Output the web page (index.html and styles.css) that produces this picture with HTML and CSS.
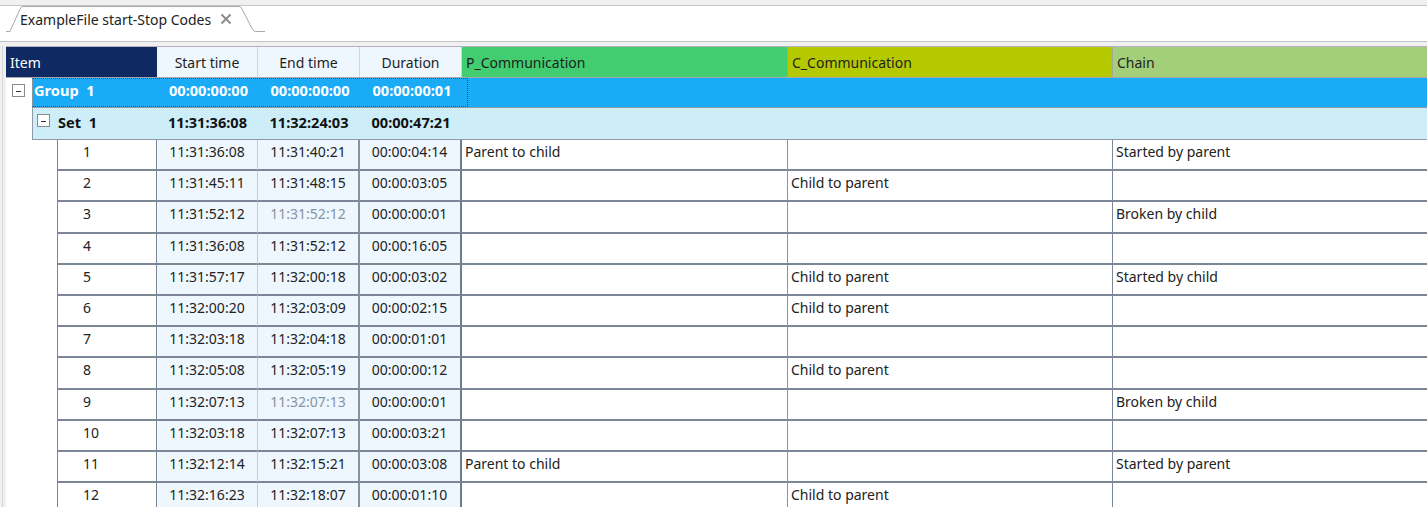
FILE: index.html
```html
<!DOCTYPE html>
<html>
<head>
<meta charset="utf-8">
<link rel="stylesheet" href="styles.css">
</head>
<body>
<div class="topbar"></div>
<div class="tabstrip">
  <div class="tab">
    <svg class="tab-outline" width="262" height="27" viewBox="0 0 262 27">
      <path d="M3 25.5 H7 L17.5 2 Q18.3 0.5 20 0.5 H236 Q237.7 0.5 238.5 2 L249.5 23.5 Q250.7 25.5 253 25.5 H262" fill="#fff" stroke="#a9a9a9" stroke-width="1"/>
    </svg>
    <span class="tab-title">ExampleFile start-Stop Codes</span>
    <svg class="tab-close" width="12" height="12" viewBox="0 0 12 12">
      <path d="M1.5 1.5 L10.5 10.5 M10.5 1.5 L1.5 10.5" stroke="#8d8d8d" stroke-width="2" fill="none"/>
    </svg>
  </div>
</div>
<div class="workspace">
  <div class="grid">
    <div class="hdr">
      <div class="hc hc-item">Item</div>
      <div class="hc hc-time">Start time</div>
      <div class="hc hc-time">End time</div>
      <div class="hc hc-time">Duration</div>
      <div class="hc hc-p">P_Communication</div>
      <div class="hc hc-c">C_Communication</div>
      <div class="hc hc-chain">Chain</div>
    </div>

    <div class="group">
      <div class="indent"><span class="exp"></span></div>
      <div class="group-focus">
        <div class="g-label">Group&nbsp; 1</div>
        <div class="g-time">00:00:00:00</div>
        <div class="g-time">00:00:00:00</div>
        <div class="g-time">00:00:00:01</div>
      </div>
      <div class="g-fill"></div>
    </div>

    <div class="set">
      <div class="indent"></div>
      <div class="s-label"><span class="exp"></span><span class="s-name">Set&nbsp; 1</span></div>
      <div class="s-time">11:31:36:08</div>
      <div class="s-time">11:32:24:03</div>
      <div class="s-time">00:00:47:21</div>
      <div class="s-fill"></div>
    </div>

    <div class="row">
      <div class="indent"></div><div class="c c-item">1</div>
      <div class="c c-st">11:31:36:08</div><div class="c c-en">11:31:40:21</div><div class="c c-du">00:00:04:14</div>
      <div class="c c-p">Parent to child</div><div class="c c-c"></div><div class="c c-ch">Started by parent</div>
    </div>
    <div class="row">
      <div class="indent"></div><div class="c c-item">2</div>
      <div class="c c-st">11:31:45:11</div><div class="c c-en">11:31:48:15</div><div class="c c-du">00:00:03:05</div>
      <div class="c c-p"></div><div class="c c-c">Child to parent</div><div class="c c-ch"></div>
    </div>
    <div class="row">
      <div class="indent"></div><div class="c c-item">3</div>
      <div class="c c-st">11:31:52:12</div><div class="c c-en dim">11:31:52:12</div><div class="c c-du">00:00:00:01</div>
      <div class="c c-p"></div><div class="c c-c"></div><div class="c c-ch">Broken by child</div>
    </div>
    <div class="row">
      <div class="indent"></div><div class="c c-item">4</div>
      <div class="c c-st">11:31:36:08</div><div class="c c-en">11:31:52:12</div><div class="c c-du">00:00:16:05</div>
      <div class="c c-p"></div><div class="c c-c"></div><div class="c c-ch"></div>
    </div>
    <div class="row">
      <div class="indent"></div><div class="c c-item">5</div>
      <div class="c c-st">11:31:57:17</div><div class="c c-en">11:32:00:18</div><div class="c c-du">00:00:03:02</div>
      <div class="c c-p"></div><div class="c c-c">Child to parent</div><div class="c c-ch">Started by child</div>
    </div>
    <div class="row">
      <div class="indent"></div><div class="c c-item">6</div>
      <div class="c c-st">11:32:00:20</div><div class="c c-en">11:32:03:09</div><div class="c c-du">00:00:02:15</div>
      <div class="c c-p"></div><div class="c c-c">Child to parent</div><div class="c c-ch"></div>
    </div>
    <div class="row">
      <div class="indent"></div><div class="c c-item">7</div>
      <div class="c c-st">11:32:03:18</div><div class="c c-en">11:32:04:18</div><div class="c c-du">00:00:01:01</div>
      <div class="c c-p"></div><div class="c c-c"></div><div class="c c-ch"></div>
    </div>
    <div class="row">
      <div class="indent"></div><div class="c c-item">8</div>
      <div class="c c-st">11:32:05:08</div><div class="c c-en">11:32:05:19</div><div class="c c-du">00:00:00:12</div>
      <div class="c c-p"></div><div class="c c-c">Child to parent</div><div class="c c-ch"></div>
    </div>
    <div class="row">
      <div class="indent"></div><div class="c c-item">9</div>
      <div class="c c-st">11:32:07:13</div><div class="c c-en dim">11:32:07:13</div><div class="c c-du">00:00:00:01</div>
      <div class="c c-p"></div><div class="c c-c"></div><div class="c c-ch">Broken by child</div>
    </div>
    <div class="row">
      <div class="indent"></div><div class="c c-item">10</div>
      <div class="c c-st">11:32:03:18</div><div class="c c-en">11:32:07:13</div><div class="c c-du">00:00:03:21</div>
      <div class="c c-p"></div><div class="c c-c"></div><div class="c c-ch"></div>
    </div>
    <div class="row">
      <div class="indent"></div><div class="c c-item">11</div>
      <div class="c c-st">11:32:12:14</div><div class="c c-en">11:32:15:21</div><div class="c c-du">00:00:03:08</div>
      <div class="c c-p">Parent to child</div><div class="c c-c"></div><div class="c c-ch">Started by parent</div>
    </div>
    <div class="row">
      <div class="indent"></div><div class="c c-item">12</div>
      <div class="c c-st">11:32:16:23</div><div class="c c-en">11:32:18:07</div><div class="c c-du">00:00:01:10</div>
      <div class="c c-p"></div><div class="c c-c">Child to parent</div><div class="c c-ch"></div>
    </div>
  </div>
</div>
</body>
</html>
```
FILE: styles.css
```css
* { box-sizing: border-box; }
html, body { margin: 0; padding: 0; }
body {
  background: #f0f0f0;
  font-family: "Noto Sans", "Open Sans", sans-serif;
  font-size: 14px;
  color: #1e1e1e;
  width: 1427px;
  height: 507px;
  overflow: hidden;
}
.topbar {
  height: 6px;
  background: #f0f0f0;
  border-bottom: 1px solid #c6c6c6;
}
.tabstrip {
  height: 36px;
  background: #fff;
  border-bottom: 1px solid #c4c4c4;
  padding-left: 3px;
}
.tab {
  position: relative;
  width: 262px;
  height: 27px;
  display: flex;
  align-items: center;
}
.tab-outline { position: absolute; left: 0; top: 0; }
.tab-title {
  position: relative;
  margin-left: 17px;
  font-size: 14px;
  color: #222;
  line-height: 20px;
  padding-top: 1px;
}
.tab-close {
  position: relative;
  margin-left: 9px;
  margin-top: -1px;
}
.workspace {
  margin-top: 4px;
  padding-left: 6px;
  position: relative;
}
.workspace::before {
  content: "";
  position: absolute;
  left: 2px; top: 0; bottom: 0;
  width: 1px;
  background: #d6d6d6;
}
.grid { background: #fff; }

/* header */
.hdr {
  display: grid;
  grid-template-columns: 151px 101px 102px 102px 326px 325px 1fr;
  height: 32px;
  border-bottom: 1px solid #a7a7ad;
  border-top: 1px solid #b6b1bd;
}
.hc {
  display: flex;
  align-items: center;
  padding-left: 4px;
  white-space: nowrap;
}
.hc-item { background: #0f2a62; color: #fff; padding-left: 4px; }
.hc-time {
  background: #eef6fe;
  justify-content: center;
  padding-left: 0;
  border-right: 1px solid #cfd6de;
}
.hc-p { background: #41cd70; border-right: 1px solid #9aa89a; }
.hc-c { background: #b5c900; border-right: 1px solid #a3a89a; }
.hc-chain { background: #a3cf7a; }

/* group row */
.group {
  display: grid;
  grid-template-columns: 26px 433px 1fr;
  height: 29px;
}
.indent { background: #fff; position: relative; }
.exp {
  position: absolute;
  width: 13px; height: 13px;
  border: 1px solid #8a8a8a;
  background: #fff;
}
.exp::after {
  content: "";
  position: absolute;
  left: 3px; top: 6px;
  width: 5px; height: 1px;
  background: #333;
}
.group .exp { left: 6px; top: 6px; }
.group-focus {
  display: grid;
  grid-template-columns: 125px 101px 102px 105px;
  background: #1aabf7;
  color: #fff;
  font-weight: 700;
  font-size: 14.6px;
  border: 1px dotted #2d4a63;
  border-left: 1px solid #8896a4;
  margin-right: -3px;
  position: relative;
  z-index: 1;
}
.g-label { padding-left: 1px; line-height: 20px; padding-top: 1px; }
.g-time { text-align: center; line-height: 20px; padding-top: 1px; }
.group .g-time:last-child { padding-right: 3px; }
.g-fill { background: #1aabf7; }

/* set row */
.set {
  display: grid;
  grid-template-columns: 26px 125px 101px 102px 102px 1fr;
  height: 33px;
}
.set > div:not(.indent) {
  background: #cdeef9;
  border-top: 1px solid #8f9aa6;
  border-bottom: 1px solid #8f9aa6;
  font-weight: 700;
  font-size: 14.6px;
  color: #111;
  line-height: 20px;
  padding-top: 4px;
}
.set > .s-label { border-left: 1px solid #8f9aa6; position: relative; padding-left: 25px; }
.set .exp { left: 4px; top: 6px; }
.s-time { text-align: center; }

/* data rows */
.row {
  display: grid;
  grid-template-columns: 51px 100px 101px 102px 102px 326px 325px 1fr;
  height: 31.2px;
}
.c {
  border-bottom: 2px solid #7b8797;
  line-height: 20px;
  padding-top: 2px;
  white-space: nowrap;
  color: #222;
}
.c-item { border-left: 1px solid #7b8797; border-right: 1px solid #7b8797; padding-left: 25px; }
.c-st, .c-en, .c-du { background: #eef6fe; text-align: center; }
.c-st { border-right: 1px solid #c3ccd6; }
.c-en { border-right: 2px solid #8793a0; }
.c-du { border-right: 2px solid #6f7c8b; padding-right: 1px; }
.c-p { padding-left: 3px; border-right: 1px solid #8793a0; }
.c-c { padding-left: 3px; border-right: 1px solid #7b8797; }
.c-ch { padding-left: 3px; }
.dim { color: #8794a1; }
```
